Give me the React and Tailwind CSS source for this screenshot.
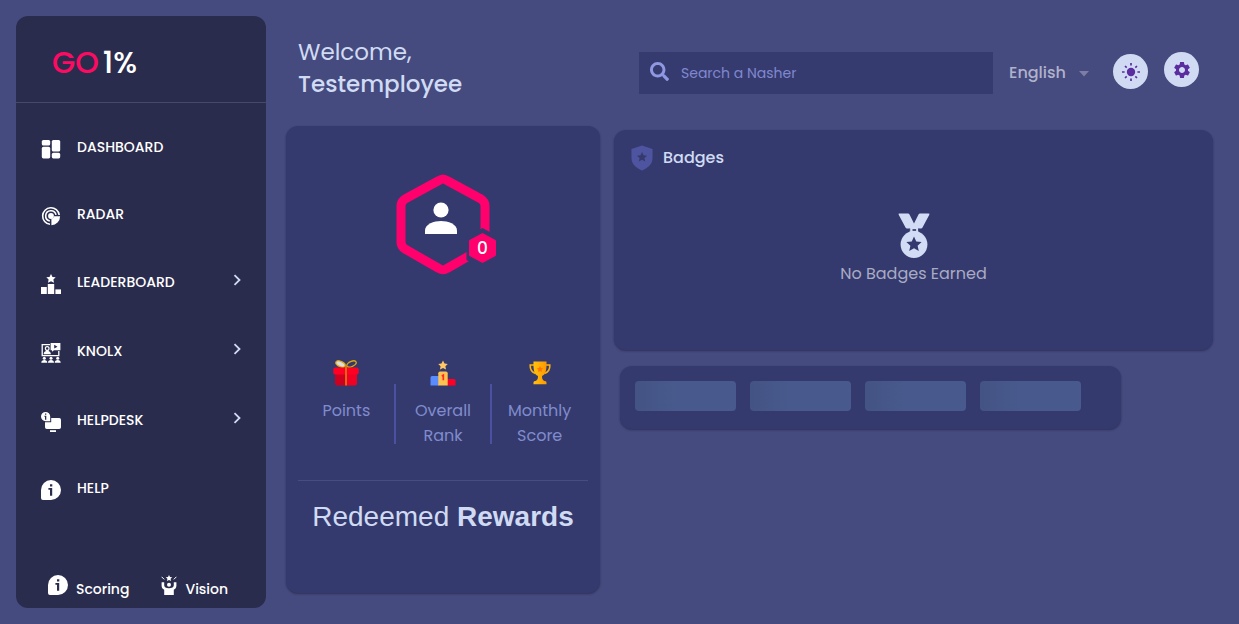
import React from "react";
import { FaSearch } from "react-icons/fa";
import { MdSettings } from "react-icons/md";

const STAR = "M12 2l3 6.6 7.2.8-5.4 4.8 1.6 7L12 17.6l-6.4 3.6 1.6-7L1.8 9.4 9 8.6z";

function DashboardIcon() {
  return (
    <svg viewBox="0 0 20 20" className="h-5 w-5 shrink-0" fill="currentColor" aria-hidden="true">
      <rect x="0.8" y="1" width="8.4" height="5.6" rx="1.6" />
      <rect x="0.8" y="7.8" width="8.4" height="11.6" rx="1.6" />
      <rect x="10.8" y="1" width="8.4" height="11.6" rx="1.6" />
      <rect x="10.8" y="13.8" width="8.4" height="5.6" rx="1.6" />
    </svg>
  );
}

function RadarIcon() {
  return (
    <svg viewBox="0 0 20 20" className="h-5 w-5 shrink-0" fill="none" stroke="currentColor" strokeWidth="1.6" aria-hidden="true">
      <path d="M9 18.3A8.3 8.3 0 1 1 18.2 9" />
      <path d="M8.8 15A5.2 5.2 0 1 1 15 8.9" />
      <circle cx="10" cy="10" r="2.9" fill="currentColor" stroke="none" />
      <path d="M10.4 12.8a3 3 0 0 0 2.6-2.6h6.1a9 9 0 0 1-8.7 9z" fill="currentColor" stroke="none" />
    </svg>
  );
}

function LeaderboardIcon() {
  return (
    <svg viewBox="0 0 20 20" className="h-5 w-5 shrink-0" fill="currentColor" aria-hidden="true">
      <path d="M10 0l1.5 2.9 3.2.4-2.3 2.2.6 3.3-3-1.6-3 1.6.6-3.3-2.3-2.2 3.2-.4z" />
      <rect x="0" y="13" width="5.8" height="7" />
      <rect x="6.8" y="10" width="6.4" height="10" />
      <rect x="14.4" y="15.4" width="5.6" height="4.6" />
    </svg>
  );
}

function KnolxIcon() {
  return (
    <svg viewBox="0 0 20 20" className="h-5 w-5 shrink-0" fill="currentColor" aria-hidden="true">
      <path d="M9 1.6H1.2v11h16.6V8" fill="none" stroke="currentColor" strokeWidth="1.3" />
      <path fillRule="evenodd" d="M9.6 0H19.4V7.2H13l-2 1.6V7.2H9.6zM13.2 1.8v3.8l3.3-1.9z" />
      <path fillRule="evenodd" d="M6.2 3a2.4 2.4 0 0 1 2.4 2.6c0 1-.5 1.9-1.2 2.3 1.5.4 2.3 1.4 2.5 3.3H2.6c.2-1.9 1-2.9 2.4-3.3A2.6 2.6 0 0 1 3.8 5.6 2.4 2.4 0 0 1 6.2 3zm0 1.2a1.2 1.2 0 1 0 0 2.5 1.2 1.2 0 0 0 0-2.5z" />
      <circle cx="3.3" cy="15.2" r="1.5" />
      <circle cx="10" cy="15.2" r="1.5" />
      <circle cx="16.7" cy="15.2" r="1.5" />
      <path d="M.3 19.8c0-1.8 1.2-2.8 3-2.8s3 1 3 2.800zM7 19.800c0-1.800 1.200-2.800 3-2.800s3 1 3 2.800zM13.700 19.800c0-1.800 1.200-2.800 3-2.800s3 1 3 2.800z" />
    </svg>
  );
}

function HelpdeskIcon() {
  return (
    <svg viewBox="0 0 20 20" className="h-5 w-5 shrink-0" fill="currentColor" aria-hidden="true">
      <path fillRule="evenodd" d="M4.6 0a4.6 4.6 0 0 1 4.6 4.600V9.200H4.600A4.600 4.600 0 0 1 4.600 0zM4 1.600v1.200h1.300V1.600zM3.400 3.800v.9H4v3h1.300V3.800z" />
      <path d="M10.200 6h8a1.800 1.800 0 0 1 1.800 1.800v7.400a1.800 1.800 0 0 1-1.800 1.800H5.800A1.800 1.800 0 0 1 4 15.200v-5h6.200z" />
      <rect x="9" y="18.200" width="6" height="1.800" />
    </svg>
  );
}

function InfoIcon() {
  return (
    <svg viewBox="0 0 20 20" className="h-5 w-5 shrink-0" fill="currentColor" aria-hidden="true">
      <path fillRule="evenodd" d="M10 0a10 10 0 0 1 0 20H2a2 2 0 0 1-2-2v-8A10 10 0 0 1 10 0zM9 4.300v2.200h2.300V4.300zM7.400 8v1.700H9v6h2.200V8z" />
    </svg>
  );
}

function VisionIcon() {
  return (
    <svg viewBox="0 0 16 20" className="h-5 w-4 shrink-0" fill="currentColor" aria-hidden="true">
      <path d="M8 0l1 2 2.200.3-1.600 1.500.4 2.200-2-1-2 1 .4-2.200L4.800 2.300 7 2z" />
      <path d="M.6 1.800l2.600 2.600M15.400 1.800l-2.600 2.600" stroke="currentColor" strokeWidth="1" />
      <circle cx="8" cy="9.800" r="2" />
      <path d="M.6 7.200h2.600v3c0 1.800 1.800 3 4.800 3s4.800-1.200 4.800-3v-3h2.600v3.600c0 2-1 3.200-2.600 4V20H3.200v-5.200C1.600 14 .6 12.800.6 10.800z" />
    </svg>
  );
}

function Chevron() {
  return (
    <svg viewBox="0 0 8 12" className="mb-2 ml-auto h-3 w-2" fill="none" stroke="#d0dbf3" strokeWidth="1.8" aria-hidden="true">
      <path d="M1.500 1.200L6.500 6l-5 4.800" />
    </svg>
  );
}

function HexAvatar() {
  return (
    <svg viewBox="0 0 96 104" className="mx-auto h-26 w-24 overflow-visible" role="img" aria-label="Level 0">
      <path
        d="M44 7.500Q48 4.500 52 7.500L86 26Q90 28.500 90 33V69Q90 73.500 86 76L52 95.500Q48 98 44 95.500L10 76Q6 73.500 6 69V33Q6 28.500 10 26Z"
        fill="none" stroke="#ff006c" strokeWidth="9" strokeLinejoin="round" />
      <circle cx="46" cy="37" r="7.600" fill="#fff" />
      <path d="M30 61V57.500c0-6.500 9-9.500 16-9.500S62 51 62 57.500v3.500z" fill="#fff" />
      <path d="M87.500 55L104 64v23l-16.500 8.500L71.500 87V64z" fill="#353a6e" />
      <path d="M87.500 60.500L100.500 67.500V82.500L87.500 89.500L74.500 82.500V67.500Z" fill="#ff006c" stroke="#ff006c" strokeLinejoin="round" />
      <text x="87.500" y="81" textAnchor="middle" fontSize="17" fontWeight="500" fill="#fff">0</text>
    </svg>
  );
}

function GiftIcon() {
  return (
    <svg viewBox="0 0 26 26" className="h-[26px] w-[26px]" aria-hidden="true">
      <ellipse cx="7.500" cy="4" rx="5" ry="2.700" transform="rotate(24 7.500 4)" fill="#ddd" stroke="#dca80c" strokeWidth="1.300" />
      <ellipse cx="18.500" cy="4" rx="5" ry="2.500" transform="rotate(-24 18.500 4)" fill="none" stroke="#dca80c" strokeWidth="1.300" />
      <path d="M2 13h11v12.500H4a2 2 0 0 1-2-2z" fill="#cd0020" />
      <path d="M13 13h11v10.500a2 2 0 0 1-2 2h-9z" fill="#f00022" />
      <rect x="0.300" y="7.500" width="25.400" height="7" rx="2" fill="#ff0024" />
      <path d="M13 6v19.500" stroke="#e07a10" strokeWidth="1.700" />
    </svg>
  );
}

function PodiumIcon() {
  return (
    <svg viewBox="0 0 26 26" className="h-[26px] w-[26px]" aria-hidden="true">
      <path d="M13 .5l1.500 3 3.300.4-2.400 2.300.6 3.300-3-1.600-3 1.600.6-3.300-2.400-2.300 3.300-.4z" fill="#ffc865" />
      <path d="M2 16h7v9.500H.500v-8A1.500 1.500 0 0 1 2 16z" fill="#5b8cff" />
      <path d="M17 19h7a1.500 1.500 0 0 1 1.500 1.500v5H17z" fill="#ff0024" />
      <path d="M10 11.500h6a1.700 1.700 0 0 1 1.700 1.700v12.300H8.300V13.200A1.700 1.700 0 0 1 10 11.500z" fill="#ffc250" />
      <path d="M11.800 16l1.500-.8v5" fill="none" stroke="#ff2a20" strokeWidth="1.700" />
    </svg>
  );
}

function TrophyIcon() {
  return (
    <svg viewBox="0 0 22 24" className="h-6 w-[22px]" aria-hidden="true">
      <defs>
        <linearGradient id="gold" x1="0" x2="1"><stop stopColor="#ffc20d" /><stop offset="1" stopColor="#ff9800" /></linearGradient>
      </defs>
      <path d="M5 4H1.200C1 8 2.200 11 6.500 12.500M17 4h3.800c.2 4-1 7-5.300 8.500" fill="none" stroke="#fbb20c" strokeWidth="1.600" />
      <path d="M4.500.5h13c.2 8-.5 13-4.500 14.500 0 3 .6 4.200 2.500 5h.5a1.500 1.500 0 0 1 1.500 1.500v1.800h-13v-1.800A1.500 1.500 0 0 1 6 20h.5c1.900-.8 2.500-2 2.500-5C5 13.500 4.300 8.500 4.500.5z" fill="url(#gold)" />
      <path d="M11 5l1 2 2.200.2-1.600 1.600.4 2.200-2-1-2 1 .4-2.200-1.600-1.600L10 7z" fill="#ff7500" />
    </svg>
  );
}

function ShieldIcon() {
  return (
    <svg viewBox="0 0 22 26" className="h-[26px] w-[22px] shrink-0" aria-hidden="true">
      <path d="M11 .5L21.500 4v9c0 6-4.500 10-10.500 12.500C5 23 .5 19 .5 13V4z" fill="#4e549f" />
      <path transform="translate(5 6) scale(.5)" d={STAR} fill="#353a6e" />
    </svg>
  );
}

function MedalIcon() {
  return (
    <svg viewBox="0 0 32 46" className="h-[46px] w-8" aria-hidden="true">
      <path d="M1.500.500H10q1 0 1.500 1L16 10.500 20.500 1.500q.5-1 1.500-1h8.500q1.500 0 .8 1.300L24.500 14.500q-.5 1-1.500 1H9q-1 0-1.500-1L.7 1.800Q0 .5 1.500.500z" fill="#d2ddf5" />
      <path d="M11.500 14h9V21h-9z" fill="#d2ddf5" />
      <path d="M14.500 17h3.600" stroke="#353a6e" strokeWidth="1.700" />
      <path d="M11.700 15.500v3M20.700 15.500v3" stroke="#353a6e" strokeWidth="1" />
      <circle cx="16" cy="31.500" r="13.400" fill="#d2ddf5" />
      <path transform="translate(7 22) scale(.75)" d={STAR} fill="#353a6e" />
    </svg>
  );
}

function SunIcon() {
  return (
    <svg viewBox="0 0 20 20" className="h-5 w-5" aria-hidden="true">
      <circle cx="10" cy="10" r="4.200" fill="#5a2ca0" />
      <path d="M10 1v2.600M10 16.400V19M1 10h2.600M16.400 10H19M4 4l1.700 1.700M14.300 14.300L16 16M4 16l1.700-1.700M14.300 5.700L16 4" stroke="#5a2ca0" strokeWidth="1.700" />
    </svg>
  );
}

const NAV = [
  { label: "DASHBOARD", Icon: DashboardIcon },
  { label: "RADAR", Icon: RadarIcon },
  { label: "LEADERBOARD", Icon: LeaderboardIcon, expands: true },
  { label: "KNOLX", Icon: KnolxIcon, expands: true },
  { label: "HELPDESK", Icon: HelpdeskIcon, expands: true },
  { label: "HELP", Icon: InfoIcon },
];

const NAV_ROW = "flex w-full items-center gap-4 pl-[25px] pr-[25px] text-left text-sm font-medium";

function Sidebar() {
  return (
    <aside className="flex w-[250px] shrink-0 flex-col rounded-xl bg-[#2a2c4e] text-white">
      <div className="flex h-[87px] items-center gap-1 border-b border-[#47496a] px-9 pt-2 text-[30px] leading-10">
        <span className="font-medium text-[#ff0a62]">GO</span>
        <span className="font-medium">1%</span>
      </div>
      <nav className="flex flex-col pt-3">
        {NAV.map(({ label, Icon, expands }) =>
          expands ? (
            <button key={label} type="button" aria-expanded="false" className={`${NAV_ROW} h-[69px]`}>
              <Icon />
              <span className="pb-1">{label}</span>
              <Chevron />
            </button>
          ) : (
            <a key={label} href="#" className={`${NAV_ROW} h-[67px]`}>
              <Icon />
              <span className="pb-1">{label}</span>
            </a>
          ),
        )}
      </nav>
      <div className="mt-auto flex items-center gap-8 pb-[9px] pl-8 text-sm font-medium">
        <a href="#" className="flex items-start gap-2"><InfoIcon /><span className="pt-1">Scoring</span></a>
        <a href="#" className="flex items-start gap-2"><VisionIcon /><span className="pt-1">Vision</span></a>
      </div>
    </aside>
  );
}

function Header() {
  return (
    <header className="flex items-start pl-3 pr-3.5">
      <h1 className="pt-5 text-[23px] leading-8 text-[#d0dbf3]">
        <span className="block font-normal">Welcome,</span>
        <span className="block font-medium">Testemployee</span>
      </h1>
      <div className="ml-auto flex items-start pt-9">
        <label className="flex h-[42px] w-[354px] items-center gap-3 bg-[#363b6f] px-[11px]">
          <FaSearch className="mb-1 h-[19px] w-[19px] text-[#8f98e2]" aria-hidden="true" />
          <input type="search" aria-label="Search a Nasher" placeholder="Search a Nasher"
            className="min-w-0 flex-1 bg-transparent text-sm text-white outline-none placeholder:text-[#8088cf]" />
        </label>
        <div className="relative ml-4">
          <select aria-label="Language" className="h-[42px] w-20 appearance-none bg-transparent font-medium text-[#b0b2cb] outline-none">
            <option>English</option>
          </select>
          <svg viewBox="0 0 10 6" className="pointer-events-none absolute right-0 top-[19px] h-1.5 w-2.5" aria-hidden="true">
            <path d="M0 0h10L5 5.500z" fill="#7e7ea4" />
          </svg>
        </div>
        <button type="button" aria-label="Switch theme" className="ml-6 mt-0.5 flex h-[35px] w-[35px] items-center justify-center rounded-full bg-[#d0dbf3]">
          <SunIcon />
        </button>
        <button type="button" aria-label="Settings" className="ml-4 flex h-[35px] w-[35px] items-center justify-center rounded-full bg-[#d0dbf3]">
          <MdSettings className="h-5 w-5 text-[#5a2ca0]" aria-hidden="true" />
        </button>
      </div>
    </header>
  );
}

const CARD = "rounded-xl bg-[#353a6e] shadow-[0_1px_2px_rgba(30,32,60,0.6)]";

const STATS = [
  { label: "Points", Icon: GiftIcon },
  { label: "Overall Rank", Icon: PodiumIcon },
  { label: "Monthly Score", Icon: TrophyIcon },
];

function ProfileCard() {
  return (
    <section className={`${CARD} h-[467px] px-3 pt-[47px]`}>
      <HexAvatar />
      <div className="mt-[83px] grid grid-cols-3">
        {STATS.map(({ label, Icon }, i) => (
          <div key={label} className="relative flex flex-col items-center text-center leading-[25px] text-[#808ccd]">
            <span className="flex h-[26px] items-center"><Icon /></span>
            <span className="mt-3 w-20">{label}</span>
            {i > 0 && <span className="absolute bottom-1 left-[-1px] top-6 w-0.5 bg-[#4b51a0]" />}
          </div>
        ))}
      </div>
      <h2 className="mt-8 border-t border-[#474c81] pt-4 text-center font-['Liberation_Sans',Arial,sans-serif] text-[28px] leading-10 text-[#d0dbf3]">
        Redeemed <b>Rewards</b>
      </h2>
    </section>
  );
}

export default function App() {
  return (
    <div className="flex min-h-screen gap-5 bg-[#454a7f] p-4 pr-[26px] font-['Poppins',Inter,sans-serif]">
      <Sidebar />
      <main className="min-w-0 flex-1">
        <Header />
        <div className="mt-[26px] grid grid-cols-[minmax(0,314fr)_minmax(0,599fr)] items-start gap-3.5">
          <ProfileCard />
          <div className="flex flex-col gap-4 pt-1">
            <section className={`${CARD} h-[220px] px-[17px] pt-[15px]`}>
              <h2 className="flex items-center gap-2.5 font-medium text-[#d0dbf3]"><ShieldIcon />Badges</h2>
              <div className="mt-[42px] flex flex-col items-center gap-[3px] text-[#a9abc4]">
                <MedalIcon />
                <p>No Badges Earned</p>
              </div>
            </section>
            <section aria-busy="true" aria-label="Loading" className={`${CARD} ml-1.5 mr-[92px] flex h-[63px] gap-3.5 pl-[15px] pr-10 pt-[15px]`}>
              {[0, 1, 2, 3].map((n) => (
                <span key={n} className="h-[30px] flex-1 rounded bg-linear-to-r from-[#435383] to-[#48598d] to-40%" />
              ))}
            </section>
          </div>
        </div>
      </main>
    </div>
  );
}
